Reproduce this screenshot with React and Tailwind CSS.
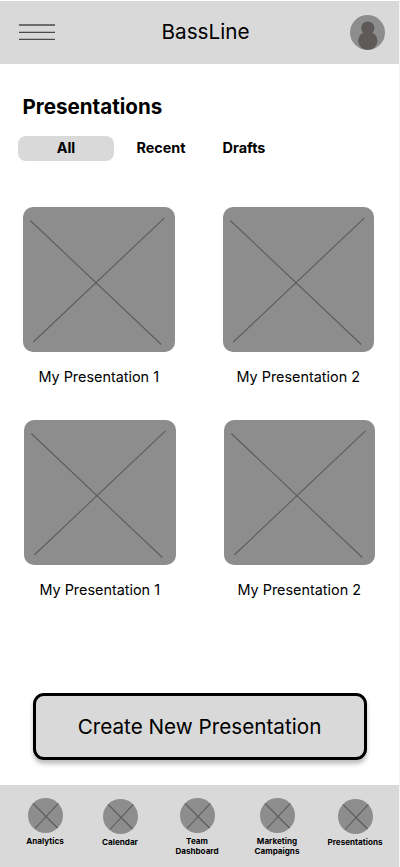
const tabs = [
  { label: 'All', className: 'w-24 rounded-lg bg-[#d9d9d9]' },
  { label: 'Recent', className: 'w-[94px]' },
  { label: 'Drafts', className: 'w-[72px]' },
];

const rows = [
  { id: 'first', className: 'pl-[23px]' },
  { id: 'second', className: 'pl-[24px]' },
];

const navItems = [
  { lines: ['Analytics'], className: 'pt-[12.5px]' },
  { lines: ['Calendar'], className: 'pt-[13.5px]' },
  { lines: ['Team', 'Dashboard'], className: 'pt-[12.5px]' },
  { lines: ['Marketing', 'Campaigns'], className: 'pt-[12.5px]' },
  { lines: ['Presentations'], className: 'pt-[13.5px]' },
];

function Avatar() {
  return (
    <svg className="h-[35px] w-[35px]" viewBox="0 0 35 35">
      <circle cx="17.5" cy="17.5" r="17.5" fill="#8d8d8d" />
      <circle cx="17.8" cy="13" r="6.6" fill="#605959" />
      <ellipse cx="17.8" cy="25.8" rx="9.7" ry="9.2" fill="#605959" />
    </svg>
  );
}

function Card({ title }) {
  return (
    <div className="flex w-[151.5px] flex-col items-center">
      <svg className="h-[145px] w-[151.5px] rounded-[10px] bg-[#8d8d8d]" viewBox="0 0 151.5 145">
        <path d="M7.3 13.5L138.3 137.5M10.3 135L141.5 10.8" stroke="#5c5c5c" strokeWidth="1.1" />
      </svg>
      <div className="mt-[15px] mb-px text-[14.4px] leading-5 whitespace-nowrap">{title}</div>
    </div>
  );
}

function NavItem({ lines, className }) {
  return (
    <a className={`flex flex-col items-center ${className}`}>
      <svg className="h-[35px] w-[35px]" viewBox="0 0 35 35">
        <circle cx="17.5" cy="17.5" r="17.5" fill="#8d8d8d" />
        <path d="M5 5.3L29.5 30M7 30.5L30.3 5.3" stroke="#5a5a5a" strokeWidth="1.1" />
      </svg>
      <div className="mt-[3px] text-center text-[8.1px] leading-[10px] font-bold">
        {lines.map((line) => (
          <div key={line}>{line}</div>
        ))}
      </div>
    </a>
  );
}

export default function App() {
  return (
    <div className="flex h-[867px] w-[400px] flex-col border-r border-[#f4f4f4] bg-white font-['Inter',sans-serif] text-black">
      {/* Header */}
      <header className="mt-px grid h-[62.5px] shrink-0 grid-cols-[1fr_auto_1fr] items-center bg-[#d9d9d9] pr-[14px] pl-[19px]">
        <svg className="h-[18px] w-9" viewBox="0 0 36 18">
          <path d="M0 2H36M0 9.4H36M0 16.4H36" stroke="#4a4a4a" strokeWidth="1.4" />
        </svg>
        <div className="ml-[7px] text-[20.7px] leading-6">BassLine</div>
        <div className="flex justify-end">
          <Avatar />
        </div>
      </header>

      {/* Presentations */}
      <main className="flex flex-1 flex-col">
        <h1 className="mt-[29px] ml-[22.5px] text-[20.6px] leading-7 font-bold">Presentations</h1>
        <div className="mt-[15px] ml-[18px] flex h-[25.5px] text-[14.4px] font-bold">
          {tabs.map((tab) => (
            <button key={tab.label} className={`flex items-center justify-center ${tab.className}`}>
              {tab.label}
            </button>
          ))}
        </div>
        <div className="mt-[46px] flex flex-col gap-[31.5px]">
          {rows.map((row) => (
            <div key={row.id} className={`flex gap-[48px] ${row.className}`}>
              <Card title="My Presentation 1" />
              <Card title="My Presentation 2" />
            </div>
          ))}
        </div>
        <button className="mt-[92.5px] ml-[32.5px] h-[66.5px] w-[334px] rounded-[11px] border-3 border-black bg-[#d9d9d9] pt-px text-[20.7px] shadow-[0_4px_4px_rgba(0,0,0,0.25)]">
          Create New Presentation
        </button>
      </main>

      {/* Bottom navigation */}
      <nav className="grid h-[82px] shrink-0 grid-cols-[75px_75px_79px_81px_75px] bg-[#d9d9d9] pl-[7.5px]">
        {navItems.map((item) => (
          <NavItem key={item.lines[0]} {...item} />
        ))}
      </nav>
    </div>
  );
}
